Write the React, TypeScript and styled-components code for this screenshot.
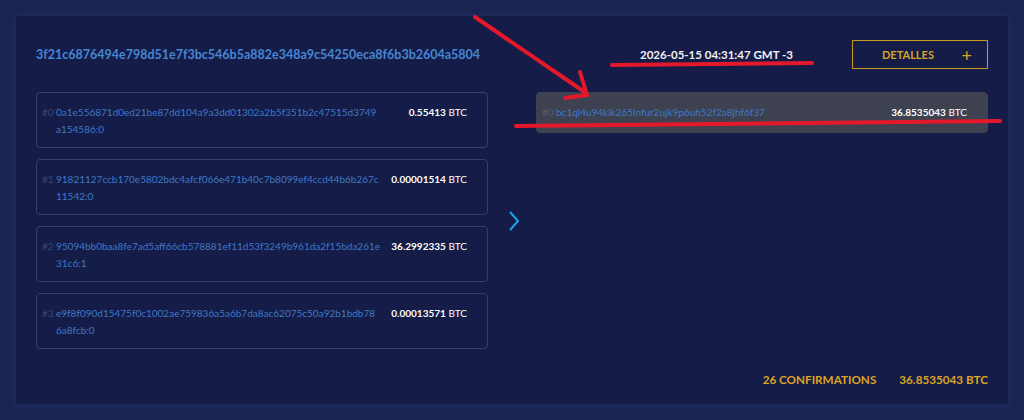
import React from 'react';
import styled, { createGlobalStyle } from 'styled-components';

const GlobalStyle = createGlobalStyle`
    html, body, #root {
        height: 100%;
    }
    body {
        margin: 0;
        background: #1a2553;
        font-family: Lato, "Open Sans", sans-serif;
    }
`

const Page = styled.div`
    height: 100%;
    box-sizing: border-box;
    padding: 16px;
    position: relative;
`

const Card = styled.section`
    height: 100%;
    box-sizing: border-box;
    background: #141c47;
    box-shadow: 0 0 6px rgba(38, 52, 104, 0.9);
    padding: 24px 20px 18px;
    display: flex;
    flex-direction: column;
`

const Grid = styled.div`
    display: grid;
    grid-template-columns: 1fr 48px 1fr;
`

const TxHash = styled.a`
    align-self: center;
    font-size: 12.5px;
    font-weight: 700;
    color: #4686d4;
    text-decoration: none;
`

const HeaderRight = styled.div`
    display: flex;
    align-items: center;
    justify-content: flex-end;
`

const Fecha = styled.span`
    color: #f2f2f2;
    font-size: 11.5px;
    font-weight: 700;
    margin-right: 59px;
`

const DetallesButton = styled.button`
    width: 136px;
    height: 29px;
    box-sizing: border-box;
    background: transparent;
    border: 1px solid #c79a22;
    color: #d9a326;
    font-family: inherit;
    font-size: 11px;
    font-weight: 700;
    display: flex;
    align-items: center;
    justify-content: space-between;
    padding: 0 15px 0 29px;
    cursor: pointer;

    span {
        font-size: 18px;
        font-weight: 400;
        line-height: 1;
    }
`

const Body = styled(Grid)`
    margin-top: 23px;
`

const Lista = styled.div`
    display: flex;
    flex-direction: column;
    gap: 11px;
`

const Flecha = styled.div`
    display: flex;
    align-items: center;
    justify-content: center;
    padding-left: 4px;
`

const Fila = styled.div<{ $salida?: boolean }>`
    box-sizing: border-box;
    display: flex;
    align-items: ${p => (p.$salida ? 'center' : 'flex-start')};
    height: ${p => (p.$salida ? '41px' : '56px')};
    padding: ${p => (p.$salida ? '0 20px 0 5px' : '11px 20px 0 5px')};
    border-radius: 4px;
    border: 1px solid ${p => (p.$salida ? '#3d4150' : '#353f68')};
    background: ${p => (p.$salida ? '#3d4150' : 'transparent')};
    font-size: 10px;
    line-height: 17px;
`

const Indice = styled.span<{ $salida?: boolean }>`
    color: ${p => (p.$salida ? '#585d6d' : '#3c4670')};
    width: 14px;
    flex-shrink: 0;
`

const Direccion = styled.a`
    color: #3f78c8;
    text-decoration: none;
    width: 324.5px;
    word-break: break-all;
`

const Monto = styled.span`
    margin-left: auto;
    color: #ffffff;
    white-space: nowrap;

    b {
        font-weight: 700;
    }
`

const Pie = styled.div`
    margin-top: auto;
    display: flex;
    justify-content: flex-end;
    gap: 23px;
    color: #dba424;
    font-size: 11.7px;
    font-weight: 700;
`

const Marcas = styled.svg`
    position: absolute;
    inset: 0;
    pointer-events: none;
`

const entradas = [
    { hash: '0a1e556871d0ed21be87dd104a9a3dd01302a2b5f351b2c47515d3749a154586:0', monto: '0.55413' },
    { hash: '91821127ccb170e5802bdc4afcf066e471b40c7b8099ef4ccd44b6b267c11542:0', monto: '0.00001514' },
    { hash: '95094bb0baa8fe7ad5aff66cb578881ef11d53f3249b961da2f15bda261e31c6:1', monto: '36.2992335' },
    { hash: 'e9f8f090d15475f0c1002ae759836a5a6b7da8ac62075c50a92b1bdb786a8fcb:0', monto: '0.00013571' },
]

export default function App() {
    return (
        <Page>
            <GlobalStyle />
            <Card>
                <Grid>
                    <TxHash href="#">3f21c6876494e798d51e7f3bc546b5a882e348a9c54250eca8f6b3b2604a5804</TxHash>
                    <div />
                    <HeaderRight>
                        <Fecha>2026-05-15 04:31:47 GMT -3</Fecha>
                        <DetallesButton>DETALLES <span>+</span></DetallesButton>
                    </HeaderRight>
                </Grid>

                <Body>
                    <Lista>
                        {entradas.map((e, i) => (
                            <Fila key={e.hash}>
                                <Indice>#{i}</Indice>
                                <Direccion href="#">{e.hash}</Direccion>
                                <Monto><b>{e.monto}</b> BTC</Monto>
                            </Fila>
                        ))}
                    </Lista>
                    <Flecha>
                        <svg width="12" height="22" viewBox="0 0 12 22">
                            <path d="M2 2 L10 11 L2 20" fill="none" stroke="#19a3eb" strokeWidth="2" />
                        </svg>
                    </Flecha>
                    <Lista>
                        <Fila $salida>
                            <Indice $salida>#0</Indice>
                            <Direccion href="#">bc1ql4u94klk265lnfur2ujk9p6uh52f2a8jhf6f37</Direccion>
                            <Monto><b>36.8535043</b> BTC</Monto>
                        </Fila>
                    </Lista>
                </Body>

                <Pie>
                    <span>26 CONFIRMATIONS</span>
                    <span>36.8535043 BTC</span>
                </Pie>
            </Card>

            <Marcas width="1024" height="420" viewBox="0 0 1024 420">
                <g stroke="#e3192b" strokeWidth="4" strokeLinecap="round" fill="none">
                    <path d="M475 17 L586 93" />
                    <path d="M580 72 L587 95 L565 98" />
                    <path d="M612 65 L812 63" />
                    <path d="M516 126 L1000 121" />
                </g>
            </Marcas>
        </Page>
    );
}
